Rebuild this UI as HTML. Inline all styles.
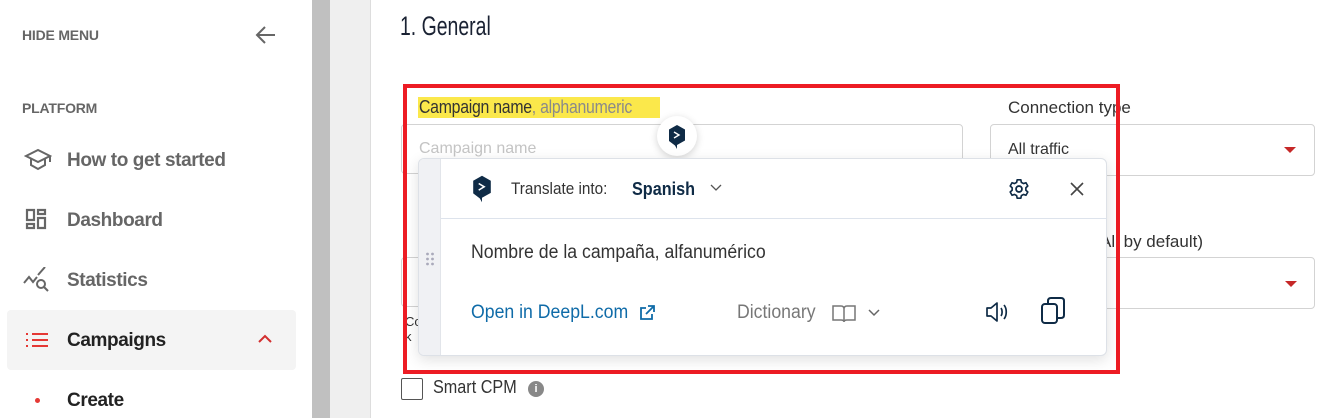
<!DOCTYPE html>
<html><head><meta charset="utf-8"><style>
*{margin:0;padding:0;box-sizing:border-box}
body{width:1333px;height:418px;overflow:hidden;background:#fff;font-family:"Liberation Sans",sans-serif;position:relative}
.a{position:absolute;white-space:nowrap}
.side{color:#666;font-size:19px;font-weight:bold;letter-spacing:-.4px}
.sm{font-size:14px;color:#555;font-weight:bold;letter-spacing:-.2px}
.inp{position:absolute;border:1px solid #d3d3d3;border-radius:4px;background:#fff}
.tri{position:absolute;width:0;height:0;border-left:6px solid transparent;border-right:6px solid transparent;border-top:6px solid #c62828}
</style></head><body>
<!-- sidebar -->
<div class="a sm" style="left:22px;top:27px;color:#666">HIDE MENU</div>
<svg class="a" style="left:254px;top:24px" width="24" height="22" viewBox="0 0 24 22"><path d="M21 11H4M11 3L3 11l8 8" fill="none" stroke="#666" stroke-width="2"/></svg>
<div class="a sm" style="left:22px;top:100px;color:#666">PLATFORM</div>
<svg class="a" style="left:24px;top:148px" width="28" height="24" viewBox="0 0 28 24"><path d="M2 8L14 2l12 6-12 6z M7 11v6l7 4 7-4v-6 M26 8v6" fill="none" stroke="#666" stroke-width="2"/></svg>
<div class="a side" style="left:67px;top:150px">How to get started</div>
<svg class="a" style="left:25px;top:208px" width="24" height="24" viewBox="0 0 24 24"><path d="M2 2h7v10H2zM13 2h7v4h-7zM13 10h7v10h-7zM2 16h7v4H2z" fill="none" stroke="#666" stroke-width="2.2"/></svg>
<div class="a side" style="left:67px;top:210px">Dashboard</div>
<svg class="a" style="left:23px;top:267px" width="28" height="28" viewBox="0 0 28 28"><path d="M1 16l5-6 4 5 4-5 M15 8l7-8" fill="none" stroke="#666" stroke-width="2"/><circle cx="18" cy="17" r="4" fill="none" stroke="#666" stroke-width="2"/><path d="M21 20l4 4" stroke="#666" stroke-width="2"/></svg>
<div class="a side" style="left:67px;top:270px">Statistics</div>
<div class="a" style="left:7px;top:310px;width:289px;height:60px;background:#f4f4f4;border-radius:4px"></div>
<svg class="a" style="left:25px;top:332px" width="24" height="16" viewBox="0 0 24 16"><path d="M1 2h2M7 2h16M1 8h2M7 8h16M1 14h2M7 14h16" stroke="#e53935" stroke-width="2"/></svg>
<div class="a side" style="left:67px;top:330px;color:#222">Campaigns</div>
<svg class="a" style="left:257px;top:334px" width="16" height="10" viewBox="0 0 16 10"><path d="M2 8l6-6 6 6" fill="none" stroke="#d32f2f" stroke-width="2"/></svg>
<div class="a" style="left:35px;top:398px;width:5px;height:5px;border-radius:50%;background:#e53935"></div>
<div class="a side" style="left:67px;top:390px;color:#222">Create</div>
<div class="a" style="left:312px;top:0;width:18px;height:418px;background:#c0c0c0"></div>
<div class="a" style="left:330px;top:0;width:41px;height:418px;background:#efefef;border-right:1px solid #ddd"></div>
<!-- main -->
<div class="a" style="left:400px;top:11px;font-size:27px;color:#1a2233;transform:scaleX(.72);transform-origin:left">1. General</div>
<div class="a" style="left:418px;top:97px;height:21px;width:242px;background:#fbe84b"></div>
<div class="a" style="left:419px;top:97px;font-size:18px;color:#333;letter-spacing:-.3px;transform:scaleX(.88);transform-origin:left">Campaign name<span style="color:#8a8a8a">, alphanumeric</span></div>
<div class="a" style="left:1008px;top:98px;font-size:17px;color:#333">Connection type</div>
<div class="inp" style="left:401px;top:124px;width:562px;height:50px"></div>
<div class="a" style="left:419px;top:140px;font-size:16px;color:#c4c4c4">Campaign name</div>
<div class="inp" style="left:990px;top:124px;width:325px;height:52px"></div>
<div class="a" style="left:1008px;top:141px;font-size:16px;color:#333">All traffic</div>
<div class="tri" style="left:1284px;top:147px"></div>
<div class="a" style="left:1100px;top:232px;font-size:17px;color:#333">All by default)</div>
<div class="inp" style="left:990px;top:257px;width:325px;height:52px"></div>
<div class="tri" style="left:1285px;top:281px"></div>
<div class="inp" style="left:401px;top:257px;width:40px;height:50px"></div>
<div class="a" style="left:405px;top:314px;font-size:13px;color:#333">Co<br>k</div>
<div class="a" style="left:401px;top:378px;width:22px;height:22px;border:1.5px solid #555;border-radius:2px"></div>
<div class="a" style="left:433px;top:377px;font-size:18px;color:#333;transform:scaleX(.9);transform-origin:left">Smart CPM</div>
<div class="a" style="left:528px;top:381px;width:16px;height:16px;border-radius:50%;background:#888;color:#fff;font-size:11px;text-align:center;line-height:16px;font-weight:bold">i</div>
<!-- red box -->
<div class="a" style="left:403px;top:84px;width:717px;height:290px;border:4px solid #ed1c24"></div>
<!-- deepl bubble -->
<div class="a" style="left:657px;top:116px;width:40px;height:40px;border-radius:50%;background:#fff;box-shadow:0 2px 8px rgba(0,0,0,.18)"></div>
<svg class="a" style="left:667px;top:124px" width="20" height="26" viewBox="0 0 20 26"><path d="M10 1l8 4.5v11L10 21v4l-2-3.5-6-4.5V5.5z" fill="#0f2b46"/><path d="M7 8l5 3-5 3" fill="none" stroke="#fff" stroke-width="1.4"/></svg>
<!-- popup -->
<div class="a" style="left:418px;top:158px;width:689px;height:198px;background:#fff;border:1px solid #dde1e7;border-radius:6px;box-shadow:0 4px 14px rgba(0,0,0,.12);overflow:hidden">
 <div class="a" style="left:0;top:0;width:22px;height:198px;background:#f0f1f4;border-right:1px solid #e2e5ea"></div>
 <svg class="a" style="left:6px;top:92px" width="10" height="16"><g fill="#aab"><circle cx="2.5" cy="3" r="1.4"/><circle cx="7.5" cy="3" r="1.4"/><circle cx="2.5" cy="8" r="1.4"/><circle cx="7.5" cy="8" r="1.4"/><circle cx="2.5" cy="13" r="1.4"/><circle cx="7.5" cy="13" r="1.4"/></g></svg>
 <div class="a" style="left:22px;top:59px;width:667px;height:1px;background:#dde3ec"></div>
 <svg class="a" style="left:52px;top:14px" width="22" height="32" viewBox="0 0 20 26"><path d="M10 1l8 4.5v11L10 21v4l-2-3.5-6-4.5V5.5z" fill="#0f2b46"/><path d="M7 8l5 3-5 3" fill="none" stroke="#fff" stroke-width="1.4"/></svg>
 <div class="a" style="left:92px;top:20px;font-size:17px;color:#333;transform:scaleX(.9);transform-origin:left">Translate into:</div>
 <div class="a" style="left:213px;top:20px;font-size:18px;font-weight:bold;color:#0f2b46;transform:scaleX(.9);transform-origin:left">Spanish</div>
 <svg class="a" style="left:291px;top:25px" width="12" height="8"><path d="M1 1l5 5 5-5" fill="none" stroke="#555" stroke-width="1.3"/></svg>
 <svg class="a" style="left:589px;top:19px" width="22" height="22" viewBox="0 0 24 24"><circle cx="12" cy="12" r="3.2" fill="none" stroke="#0f2b46" stroke-width="2"/><path d="M10 2h4l.6 2.8 2.3 1.3 2.7-.9 2 3.5-2.1 1.9v2.8l2.1 1.9-2 3.5-2.7-.9-2.3 1.3L14 22h-4l-.6-2.8-2.3-1.3-2.7.9-2-3.5 2.1-1.9v-2.8L2.4 8.7l2-3.5 2.7.9 2.3-1.3z" fill="none" stroke="#0f2b46" stroke-width="1.8" stroke-linejoin="round"/></svg>
 <svg class="a" style="left:651px;top:23px" width="14" height="14"><path d="M1 1l12 12M13 1L1 13" stroke="#444" stroke-width="1.6"/></svg>
 <div class="a" style="left:52px;top:83px;font-size:19px;color:#333;transform:scaleX(.93);transform-origin:left">Nombre de la campaña, alfanumérico</div>
 <div class="a" style="left:52px;top:143px;font-size:19px;color:#0f6ba8;transform:scaleX(.93);transform-origin:left">Open in DeepL.com</div>
 <svg class="a" style="left:220px;top:146px" width="16" height="16" viewBox="0 0 16 16"><path d="M7 3H2v11h11V9M9 1h6v6M15 1L7 9" fill="none" stroke="#0f6ba8" stroke-width="1.8"/></svg>
 <div class="a" style="left:318px;top:143px;font-size:19px;color:#777;transform:scaleX(.93);transform-origin:left">Dictionary</div>
 <svg class="a" style="left:412px;top:144px" width="26" height="22" viewBox="0 0 26 20"><path d="M2 2h8c2 0 3 1 3 3v13c0-1.5-1-2-3-2H2zM24 2h-8c-2 0-3 1-3 3v13c0-1.5 1-2 3-2h8z" fill="none" stroke="#777" stroke-width="1.5"/></svg>
 <svg class="a" style="left:449px;top:150px" width="12" height="8"><path d="M1 1l5 5 5-5" fill="none" stroke="#666" stroke-width="1.5"/></svg>
 <svg class="a" style="left:566px;top:140px" width="26" height="26" viewBox="0 0 26 24"><path d="M2 8h4l6-5v18l-6-5H2z" fill="none" stroke="#0f2b46" stroke-width="1.7" stroke-linejoin="round"/><path d="M16 8c1.5 2 1.5 6 0 8M19 5c3 3.5 3 10.5 0 14" fill="none" stroke="#0f2b46" stroke-width="1.7"/></svg>
 <svg class="a" style="left:621px;top:137px" width="28" height="30" viewBox="0 0 28 30"><rect x="2" y="8" width="15" height="19" rx="3" fill="none" stroke="#0f2b46" stroke-width="2"/><path d="M8 8V5c0-2 1-3 3-3h10c2 0 3 1 3 3v14c0 2-1 3-3 3h-4" fill="none" stroke="#0f2b46" stroke-width="2"/></svg>
</div>
</body></html>
